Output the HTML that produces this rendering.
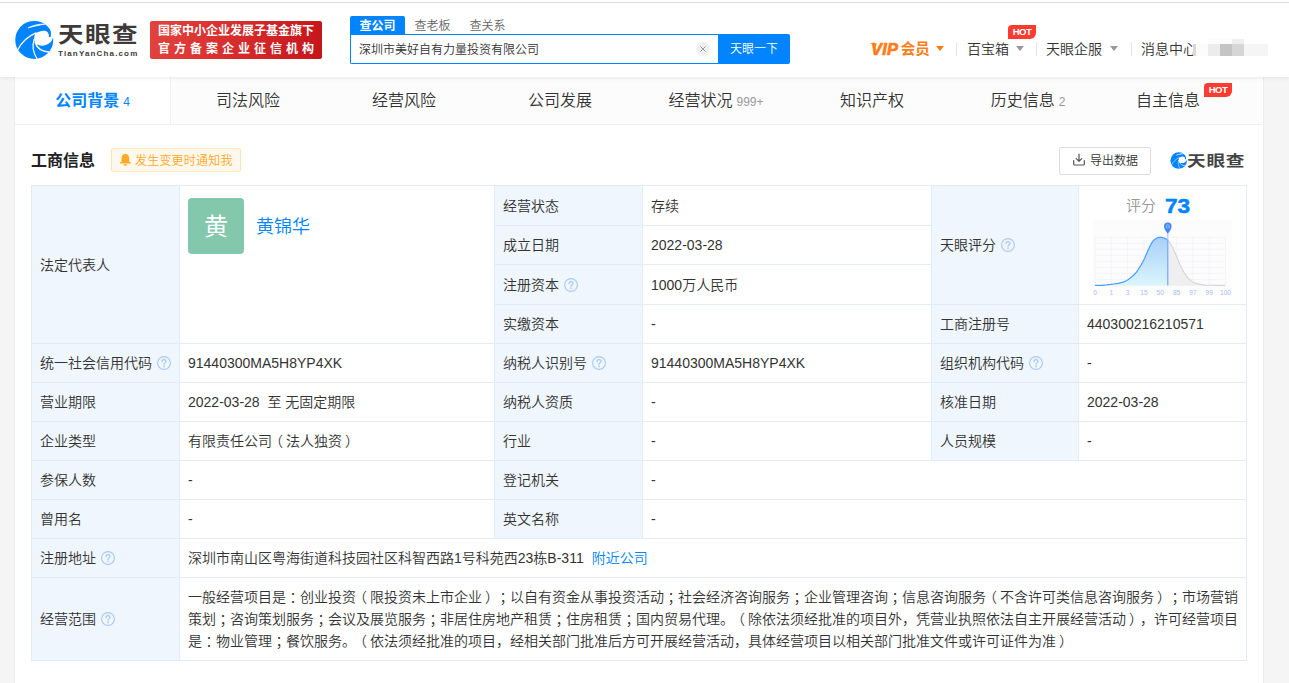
<!DOCTYPE html>
<html lang="zh-CN">
<head>
<meta charset="utf-8">
<title>天眼查 - 深圳市美好自有力量投资有限公司</title>
<style>
*{box-sizing:border-box;margin:0;padding:0}
html,body{width:1289px;height:683px;overflow:hidden}
body{font-weight:350;text-spacing-trim:space-all;background:#f5f5f5;font-family:"Liberation Sans","Noto Sans CJK SC",sans-serif;font-size:14px;color:#333;position:relative}
.abs{position:absolute}
/* header */
#hd{position:absolute;left:0;top:0;width:1289px;height:77px;background:#fff;box-shadow:0 1px 4px rgba(0,0,0,.08);z-index:5}
#topline{position:absolute;left:0;top:2px;width:1289px;height:1px;background:#dcdcdc}
#logo{position:absolute;left:12px;top:18px;width:44px;height:44px}
#lg-cn{position:absolute;left:58px;top:18.8px;font-size:21.5px;line-height:32px;font-weight:700;color:#3e3a39;letter-spacing:1.2px;white-space:nowrap;transform:scaleX(1.19);transform-origin:0 0}
#lg-en{position:absolute;left:58px;top:49px;font-size:8px;line-height:10px;font-weight:700;color:#3e3a39;letter-spacing:1.15px;white-space:nowrap}
#gov{position:absolute;left:150px;top:21px;width:172px;height:38px;border-radius:2px;background:linear-gradient(100deg,#e2433f 0%,#d52a2b 55%,#c5151b 100%);color:#fff;font-weight:700;font-size:12px;white-space:nowrap}
#gov div{position:absolute;left:8px;height:17px;line-height:17px}
#gov .l1{top:2px}
#gov .l2{top:19.6px;letter-spacing:4px}
.stab{position:absolute;top:16px;width:55px;height:18px;line-height:20px;text-align:center;font-size:12px;color:#666}
.stab.on{background:#0084ff;color:#fff;font-weight:700;border-radius:2px 2px 0 0}
#sbox{position:absolute;left:350px;top:34px;width:369px;height:30px;border:1px solid #0084ff;border-right:0;border-radius:0 0 0 2px;background:#fff}
#sbox span.t{position:absolute;left:8px;top:1px;line-height:28px;font-size:12px;color:#333;white-space:nowrap}
#sclr{position:absolute;left:696px;top:42px;width:14px;height:14px;border-radius:50%;background:#f0f0f0}
#sbtn{position:absolute;left:718px;top:34px;width:72px;height:30px;background:#0084ff;border-radius:0 2px 2px 0;color:#fff;font-size:12px;line-height:30px;text-align:center}
.nav{position:absolute;top:38px;height:22px;line-height:22px;font-size:14px;color:#333;white-space:nowrap}
.sep{position:absolute;top:42px;width:1px;height:14px;background:#e6e6e6}
.caret{position:absolute;top:46px;width:0;height:0;border-left:4px solid transparent;border-right:4px solid transparent;border-top:5px solid #999}
.hot{position:absolute;width:28px;height:14px;background:#fe3b30;border-radius:4px 0 6px 0;color:#fff;font-weight:700;font-size:9.6px;line-height:13.6px;text-align:center;letter-spacing:-.55px}
/* container */
#wrap{position:absolute;left:14px;top:77px;width:1250px;height:606px;background:#fff;border-left:1px solid #ececec;border-right:1px solid #ececec}
#tabs{position:absolute;left:0;top:0;width:1247px;height:48px;background:#fcfcfc;border-bottom:1px solid #eee}
.tab{position:absolute;top:0;width:156px;height:47px;line-height:47px;padding-right:2px;text-align:center;font-size:16px;color:#333;white-space:nowrap}
.tab.on{padding-right:0;background:#fff;color:#0084ff;font-weight:700;height:47px;border-right:1px solid #efefef}
.tab small{font-size:12px;font-weight:350;color:#999;margin-left:4px}
.tab.on small{color:#0084ff}
#sect{position:absolute;left:16px;top:68px;font-size:16px;line-height:32px;font-weight:700;color:#222}
#notice{position:absolute;left:96px;top:71px;width:130px;height:24px;border:1px solid #ffe4bd;background:#fff8ec;border-radius:2px;color:#ffa929;font-size:12px;line-height:22px;white-space:nowrap}
#notice span{position:absolute;left:23px;top:.5px;letter-spacing:.2px}
#export{position:absolute;left:1044px;top:70px;width:92px;height:28px;border:1px solid #ddd;border-radius:2px;background:#fff;font-size:12px;color:#333;line-height:26px;white-space:nowrap}
#export span{position:absolute;left:30px;top:0}
#wm{position:absolute;left:1154.2px;top:74px;width:19.2px;height:19.2px}
#wm-t{position:absolute;left:1171.6px;top:70px;font-size:14.7px;line-height:28px;font-weight:700;color:#444;white-space:nowrap;letter-spacing:.6px;transform:scaleX(1.27);transform-origin:0 0}
/* table */
table{position:absolute;left:16px;top:108px;width:1216px;border-collapse:separate;border-spacing:0;table-layout:fixed;border-top:1px solid #e2ecf6;border-left:1px solid #e2ecf6;font-size:14px;line-height:22px;color:#333}
td{border-right:1px solid #e2ecf6;border-bottom:1px solid #e2ecf6;padding:8px 8px 8px 8px;vertical-align:middle;background:#fff;white-space:nowrap;overflow:hidden}
td.k{background:#eff6fd}
td.wrap{white-space:normal}
a{color:#0084ff;text-decoration:none}
.pc{position:relative;left:3.5px}
.pl{position:relative;left:-3px}
.pr{position:relative;left:3px}
.q{display:inline-block;width:14px;height:14px;vertical-align:-2px;margin-left:5px}
</style>
</head>
<body>
<svg width="0" height="0" style="position:absolute"><defs><symbol id="tyc" viewBox="0 0 683 683">
<circle cx="345" cy="340" r="295" fill="#0084ff"/>
<path d="M368 236C420 205 480 190 525 202C560 214 576 250 572 294L598 300C606 270 608 230 598 190L700 190L700 316L634 312C620 370 560 420 480 430C440 432 405 422 385 408C365 390 352 370 348 350C338 310 348 262 368 236Z" fill="#fff"/>
<path d="M252 153C330 110 420 92 510 96C420 110 330 130 252 153Z" fill="#fff" stroke="#fff" stroke-width="12" stroke-linejoin="round"/>
<path d="M90 492C150 370 250 282 372 230" fill="none" stroke="#fff" stroke-width="19" stroke-linecap="round"/>
<path d="M345 330C312 420 330 540 390 634" fill="none" stroke="#fff" stroke-width="19" stroke-linecap="round"/>
<path d="M360 380C390 470 470 520 572 528" fill="none" stroke="#fff" stroke-width="24" stroke-linecap="round"/>
</symbol></defs></svg>
<div id="hd">
  <div id="topline"></div>
  <svg id="logo"><use href="#tyc"/></svg>
  <div id="lg-cn">天眼查</div>
  <div id="lg-en">TianYanCha.com</div>
  <div id="gov"><div class="l1">国家中小企业发展子基金旗下</div><div class="l2">官方备案企业征信机构</div></div>
  <div class="stab on" style="left:350px">查公司</div>
  <div class="stab" style="left:405px">查老板</div>
  <div class="stab" style="left:460px">查关系</div>
  <div id="sbox"><span class="t">深圳市美好自有力量投资有限公司</span></div>
  <div id="sclr"><svg width="14" height="14" viewBox="0 0 14 14"><path d="M4.3 4.3l5.4 5.4M9.7 4.3l-5.4 5.4" stroke="#999" stroke-width="1" fill="none"/></svg></div>
  <div id="sbtn">天眼一下</div>
  <div class="nav" style="left:871px;color:#ff7d18;font-weight:700;font-size:14.5px"><i style="display:inline-block;font-size:16.5px;letter-spacing:.2px;-webkit-text-stroke:.7px #ff7d18;margin-right:2.5px;vertical-align:-.5px">VIP</i><span style="position:relative;top:-.8px">会员</span></div><svg class="abs" style="left:868px;top:41px" width="12" height="8" viewBox="0 0 12 8"><path d="M1.6 2.2L9 2.4L7.2 6.2C6 4.2 4.2 3 1.6 2.2Z" fill="#ff7d18"/></svg>
  <div class="caret" style="left:936px;border-top-color:#ff7d18"></div>
  <div class="sep" style="left:956px"></div>
  <div class="nav" style="left:967px">百宝箱</div>
  <div class="caret" style="left:1016px"></div>
  <div class="hot" style="left:1008px;top:25px">HOT</div>
  <div class="sep" style="left:1036px"></div>
  <div class="nav" style="left:1046px">天眼企服</div>
  <div class="caret" style="left:1110px"></div>
  <div class="sep" style="left:1131px"></div>
  <div class="nav" style="left:1141px">消息中心</div>
  <div id="blur" class="abs" style="left:1193px;top:39px;width:75px;height:17px;background:#fff">
    <i class="abs" style="left:0;top:5px;width:3px;height:12px;background:#d8d8d8"></i>
    <i class="abs" style="left:3px;top:5px;width:12px;height:12px;background:#fcfcfc"></i>
    <i class="abs" style="left:15px;top:5px;width:12px;height:12px;background:#ececec"></i>
    <i class="abs" style="left:27px;top:5px;width:12px;height:12px;background:#c4c4c4"></i>
    <i class="abs" style="left:39px;top:5px;width:12px;height:12px;background:#d6d6d6"></i>
    <i class="abs" style="left:51px;top:5px;width:24px;height:12px;background:#f5f5f5"></i>
    <i class="abs" style="left:15px;top:0;width:24px;height:5px;background:#fcfcfc"></i>
    <i class="abs" style="left:39px;top:0;width:12px;height:5px;background:#eee"></i>
  </div>
</div>

<div id="wrap">
  <div id="tabs">
    <div class="tab on" style="left:0">公司背景<small>4</small></div>
    <div class="tab" style="left:156px">司法风险</div>
    <div class="tab" style="left:312px">经营风险</div>
    <div class="tab" style="left:468px">公司发展</div>
    <div class="tab" style="left:624px">经营状况<small>999+</small></div>
    <div class="tab" style="left:780px">知识产权</div>
    <div class="tab" style="left:936px">历史信息<small>2</small></div>
    <div class="tab" style="left:1092px">自主信息<span style="display:inline-block;width:32px"></span></div>
    <div class="hot" style="left:1189px;top:6px">HOT</div>
  </div>
  <div id="sect">工商信息</div>
  <div id="notice"><svg class="abs" style="left:7.2px;top:3.8px" width="13" height="14" viewBox="0 0 13 14"><path d="M6.4 .9C3.9 .9 2.6 2.9 2.6 5V8.4L1 9.6V10.5H11.8V9.6L10.2 8.4V5C10.2 2.9 8.9 .9 6.4 .9Z" fill="#ffa929"/><path d="M4.5 11.2H8.3C8.3 12.1 7.5 12.7 6.4 12.7C5.3 12.7 4.5 12.1 4.5 11.2Z" fill="#ffa929"/></svg><span>发生变更时通知我</span></div>
  <div id="export"><svg class="abs" style="left:12px;top:5.3px" width="14" height="14" viewBox="0 0 14 14"><path d="M7 1.2V8.2M4.2 5.6L7 8.3L9.8 5.6M1.7 7.6V11.2Q1.7 12 2.5 12H11.5Q12.3 12 12.3 11.2V7.6" fill="none" stroke="#555" stroke-width="1.2" stroke-linecap="round" stroke-linejoin="round"/></svg><span>导出数据</span></div>
  <svg id="wm"><use href="#tyc"/></svg>
  <div id="wm-t">天眼查</div>

  <table>
    <colgroup><col style="width:148px"><col style="width:315px"><col style="width:148px"><col style="width:289px"><col style="width:147px"><col style="width:168px"></colgroup>
    <tr style="height:40px"><td class="k" rowspan="4">法定代表人</td><td rowspan="4" id="rep" style="vertical-align:top"><div style="position:relative;height:141px"><div class="abs" style="left:0;top:4px;width:56px;height:56px;border-radius:4px;background:#83c8ad;color:#fff;font-size:24px;font-weight:400;line-height:57px;text-align:center">黄</div><a class="abs" style="left:68px;top:18.7px;font-size:18px;line-height:28px">黄锦华</a></div></td><td class="k">经营状态</td><td>存续</td><td class="k" rowspan="3">天眼评分<svg class="q" viewBox="0 0 14 14"><circle cx="7" cy="7" r="6.4" fill="none" stroke="#a9caee" stroke-width="1.1"/><path d="M5 5.6C5 4.4 5.9 3.7 7 3.7C8.1 3.7 9 4.4 9 5.4C9 6.9 7 6.8 7 8.6" fill="none" stroke="#a9caee" stroke-width="1.2" stroke-linecap="round"/><circle cx="7" cy="10.4" r=".8" fill="#a9caee"/></svg></td><td rowspan="3" id="score" style="padding:0;vertical-align:top"><div style="position:relative;width:167px;height:118px"><div class="abs" style="left:47px;top:8px;font-size:15px;line-height:23px;color:#999">评分</div><div class="abs" style="left:85.5px;top:7.3px;font-size:21px;line-height:26px;font-weight:700;color:#0084ff;transform:scaleX(1.08);transform-origin:0 0;-webkit-text-stroke:.5px #0084ff">73</div><svg class="abs" style="left:14px;top:34px" width="139" height="76" viewBox="0 0 139 76">
<defs><linearGradient id="gb" x1="0" y1="0" x2="0" y2="1"><stop offset="0" stop-color="#a9d0f8"/><stop offset="1" stop-color="#dbf5fc"/></linearGradient></defs>
<rect x="0" y="0" width="139" height="76" fill="#fcfcfd"/>
<path d="M2.0 17.2V65.6M18.3 17.2V65.6M34.6 17.2V65.6M50.9 17.2V65.6M67.2 17.2V65.6M83.6 17.2V65.6M99.9 17.2V65.6M116.2 17.2V65.6M132.5 17.2V65.6M2.0 17.2H132.5M2.0 23.2H132.5M2.0 29.3H132.5M2.0 35.3H132.5M2.0 41.4H132.5M2.0 47.4H132.5M2.0 53.5H132.5M2.0 59.5H132.5M2.0 65.6H132.5" stroke="#f3f4f7" stroke-width="1" fill="none"/>
<polygon points="2.0,65.6 2.0,65.4 2.6,65.4 3.3,65.4 4.2,65.4 5.2,65.4 6.2,65.4 7.3,65.4 8.4,65.3 9.4,65.3 10.5,65.2 11.5,65.1 12.6,65.0 13.7,64.9 14.9,64.7 16.0,64.6 17.1,64.5 18.2,64.3 19.3,64.2 20.4,64.0 21.6,63.9 22.7,63.7 23.8,63.6 24.9,63.4 26.0,63.2 27.0,62.9 28.0,62.6 29.0,62.4 29.9,62.1 30.9,61.8 31.8,61.4 32.7,61.0 33.7,60.5 34.6,60.0 35.6,59.3 36.6,58.6 37.6,57.8 38.6,57.0 39.6,56.1 40.6,55.2 41.4,54.3 42.2,53.5 42.9,52.8 43.5,52.1 44.0,51.4 44.5,50.7 44.9,50.0 45.4,49.3 45.8,48.5 46.3,47.7 46.9,46.8 47.4,46.0 48.0,45.1 48.5,44.1 49.1,43.2 49.7,42.2 50.2,41.2 50.8,40.1 51.3,38.9 51.9,37.7 52.4,36.4 53.0,35.1 53.5,33.7 54.1,32.5 54.6,31.2 55.1,30.1 55.6,29.1 56.0,28.1 56.5,27.2 56.9,26.2 57.3,25.4 57.8,24.6 58.2,23.8 58.6,23.1 59.0,22.4 59.5,21.8 59.9,21.2 60.3,20.7 60.7,20.2 61.2,19.8 61.6,19.4 62.1,19.0 62.7,18.7 63.3,18.3 63.9,18.0 64.5,17.8 65.2,17.6 65.8,17.4 66.4,17.3 67.0,17.2 67.6,17.3 68.2,17.3 68.8,17.4 69.4,17.6 69.9,17.8 70.5,18.0 71.0,18.2 71.5,18.4 72.0,18.6 72.4,18.7 72.8,18.9 73.2,19.0 73.6,19.2 74.0,19.5 74.4,19.8 74.8,20.2 74.8,20.2 74.8,65.6" fill="url(#gb)"/>
<polygon points="74.8,65.6 74.8,20.2 75.2,20.6 75.7,21.1 76.1,21.7 76.6,22.3 77.0,23.0 77.5,23.7 78.0,24.5 78.5,25.4 79.1,26.5 79.6,27.6 80.2,28.8 80.8,30.1 81.4,31.4 82.0,32.7 82.6,34.1 83.2,35.4 83.8,36.8 84.4,38.2 85.0,39.6 85.5,41.1 86.1,42.5 86.7,43.9 87.3,45.3 87.9,46.5 88.5,47.7 89.0,48.8 89.6,49.9 90.1,50.9 90.7,51.9 91.3,52.8 91.9,53.8 92.6,54.7 93.3,55.7 94.1,56.7 94.8,57.6 95.7,58.6 96.5,59.5 97.4,60.3 98.4,61.1 99.4,61.7 100.5,62.3 101.6,62.8 102.9,63.2 104.2,63.6 105.5,63.9 106.7,64.2 107.9,64.4 109.0,64.7 109.9,64.9 110.6,65.0 111.2,65.1 111.9,65.1 112.5,65.2 113.3,65.2 114.3,65.2 115.6,65.3 117.4,65.3 119.5,65.3 122.0,65.4 124.5,65.4 127.0,65.4 129.2,65.4 131.1,65.4 132.5,65.4 132.5,65.6" fill="#efefef"/>
<polyline points="74.8,20.2 75.2,20.6 75.7,21.1 76.1,21.7 76.6,22.3 77.0,23.0 77.5,23.7 78.0,24.5 78.5,25.4 79.1,26.5 79.6,27.6 80.2,28.8 80.8,30.1 81.4,31.4 82.0,32.7 82.6,34.1 83.2,35.4 83.8,36.8 84.4,38.2 85.0,39.6 85.5,41.1 86.1,42.5 86.7,43.9 87.3,45.3 87.9,46.5 88.5,47.7 89.0,48.8 89.6,49.9 90.1,50.9 90.7,51.9 91.3,52.8 91.9,53.8 92.6,54.7 93.3,55.7 94.1,56.7 94.8,57.6 95.7,58.6 96.5,59.5 97.4,60.3 98.4,61.1 99.4,61.7 100.5,62.3 101.6,62.8 102.9,63.2 104.2,63.6 105.5,63.9 106.7,64.2 107.9,64.4 109.0,64.7 109.9,64.9 110.6,65.0 111.2,65.1 111.9,65.1 112.5,65.2 113.3,65.2 114.3,65.2 115.6,65.3 117.4,65.3 119.5,65.3 122.0,65.4 124.5,65.4 127.0,65.4 129.2,65.4 131.1,65.4 132.5,65.4" fill="none" stroke="#d6d6d6" stroke-width="1.1"/>
<polyline points="2.0,65.4 2.6,65.4 3.3,65.4 4.2,65.4 5.2,65.4 6.2,65.4 7.3,65.4 8.4,65.3 9.4,65.3 10.5,65.2 11.5,65.1 12.6,65.0 13.7,64.9 14.9,64.7 16.0,64.6 17.1,64.5 18.2,64.3 19.3,64.2 20.4,64.0 21.6,63.9 22.7,63.7 23.8,63.6 24.9,63.4 26.0,63.2 27.0,62.9 28.0,62.6 29.0,62.4 29.9,62.1 30.9,61.8 31.8,61.4 32.7,61.0 33.7,60.5 34.6,60.0 35.6,59.3 36.6,58.6 37.6,57.8 38.6,57.0 39.6,56.1 40.6,55.2 41.4,54.3 42.2,53.5 42.9,52.8 43.5,52.1 44.0,51.4 44.5,50.7 44.9,50.0 45.4,49.3 45.8,48.5 46.3,47.7 46.9,46.8 47.4,46.0 48.0,45.1 48.5,44.1 49.1,43.2 49.7,42.2 50.2,41.2 50.8,40.1 51.3,38.9 51.9,37.7 52.4,36.4 53.0,35.1 53.5,33.7 54.1,32.5 54.6,31.2 55.1,30.1 55.6,29.1 56.0,28.1 56.5,27.2 56.9,26.2 57.3,25.4 57.8,24.6 58.2,23.8 58.6,23.1 59.0,22.4 59.5,21.8 59.9,21.2 60.3,20.7 60.7,20.2 61.2,19.8 61.6,19.4 62.1,19.0 62.7,18.7 63.3,18.3 63.9,18.0 64.5,17.8 65.2,17.6 65.8,17.4 66.4,17.3 67.0,17.2 67.6,17.3 68.2,17.3 68.8,17.4 69.4,17.6 69.9,17.8 70.5,18.0 71.0,18.2 71.5,18.4 72.0,18.6 72.4,18.7 72.8,18.9 73.2,19.0 73.6,19.2 74.0,19.5 74.4,19.8 74.8,20.2 74.8,20.2" fill="none" stroke="#4c9ffe" stroke-width="1.25"/>
<path d="M74.8 12.5V20.2" stroke="#a9c6ff" stroke-width="1.1"/>
<path d="M74.8 20.2V65.6" stroke="#6aa2ff" stroke-width="1.15"/>
<path d="M74.8 13.8C73.6 11.8 71.0 9.2 71.0 6.4A3.8 3.8 0 1 1 78.6 6.4C78.6 9.2 76.0 11.8 74.8 13.8Z" fill="#3f86f8"/>
<circle cx="74.8" cy="6.4" r="2.1" fill="#8db9fb"/><circle cx="74.8" cy="6.4" r="1" fill="#3f86f8"/>
<g font-family="Liberation Sans, sans-serif" font-size="6.5" fill="#a6c1ee"><text x="2.0" y="74.6" text-anchor="middle">0</text><text x="18.3" y="74.6" text-anchor="middle">1</text><text x="34.6" y="74.6" text-anchor="middle">3</text><text x="50.9" y="74.6" text-anchor="middle">15</text><text x="67.2" y="74.6" text-anchor="middle">50</text><text x="83.6" y="74.6" text-anchor="middle">85</text><text x="99.9" y="74.6" text-anchor="middle">97</text><text x="116.2" y="74.6" text-anchor="middle">99</text><text x="132.5" y="74.6" text-anchor="middle">100</text></g>
</svg></div></td></tr>
    <tr style="height:39px"><td class="k">成立日期</td><td>2022-03-28</td></tr>
    <tr style="height:40px"><td class="k">注册资本<svg class="q" viewBox="0 0 14 14"><circle cx="7" cy="7" r="6.4" fill="none" stroke="#a9caee" stroke-width="1.1"/><path d="M5 5.6C5 4.4 5.9 3.7 7 3.7C8.1 3.7 9 4.4 9 5.4C9 6.9 7 6.8 7 8.6" fill="none" stroke="#a9caee" stroke-width="1.2" stroke-linecap="round"/><circle cx="7" cy="10.4" r=".8" fill="#a9caee"/></svg></td><td>1000万人民币</td></tr>
    <tr style="height:39px"><td class="k">实缴资本</td><td>-</td><td class="k">工商注册号</td><td>440300216210571</td></tr>
    <tr style="height:39px"><td class="k">统一社会信用代码<svg class="q" viewBox="0 0 14 14"><circle cx="7" cy="7" r="6.4" fill="none" stroke="#a9caee" stroke-width="1.1"/><path d="M5 5.6C5 4.4 5.9 3.7 7 3.7C8.1 3.7 9 4.4 9 5.4C9 6.9 7 6.8 7 8.6" fill="none" stroke="#a9caee" stroke-width="1.2" stroke-linecap="round"/><circle cx="7" cy="10.4" r=".8" fill="#a9caee"/></svg></td><td>91440300MA5H8YP4XK</td><td class="k">纳税人识别号<svg class="q" viewBox="0 0 14 14"><circle cx="7" cy="7" r="6.4" fill="none" stroke="#a9caee" stroke-width="1.1"/><path d="M5 5.6C5 4.4 5.9 3.7 7 3.7C8.1 3.7 9 4.4 9 5.4C9 6.9 7 6.8 7 8.6" fill="none" stroke="#a9caee" stroke-width="1.2" stroke-linecap="round"/><circle cx="7" cy="10.4" r=".8" fill="#a9caee"/></svg></td><td>91440300MA5H8YP4XK</td><td class="k">组织机构代码<svg class="q" viewBox="0 0 14 14"><circle cx="7" cy="7" r="6.4" fill="none" stroke="#a9caee" stroke-width="1.1"/><path d="M5 5.6C5 4.4 5.9 3.7 7 3.7C8.1 3.7 9 4.4 9 5.4C9 6.9 7 6.8 7 8.6" fill="none" stroke="#a9caee" stroke-width="1.2" stroke-linecap="round"/><circle cx="7" cy="10.4" r=".8" fill="#a9caee"/></svg></td><td>-</td></tr>
    <tr style="height:39px"><td class="k">营业期限</td><td>2022-03-28&nbsp; 至 无固定期限</td><td class="k">纳税人资质</td><td>-</td><td class="k">核准日期</td><td>2022-03-28</td></tr>
    <tr style="height:39px"><td class="k">企业类型</td><td>有限责任公司<span class="pl">（</span>法人独资<span class="pr">）</span></td><td class="k">行业</td><td>-</td><td class="k">人员规模</td><td>-</td></tr>
    <tr style="height:39px"><td class="k">参保人数</td><td>-</td><td class="k">登记机关</td><td colspan="3">-</td></tr>
    <tr style="height:39px"><td class="k">曾用名</td><td>-</td><td class="k">英文名称</td><td colspan="3">-</td></tr>
    <tr style="height:39px"><td class="k">注册地址<svg class="q" viewBox="0 0 14 14"><circle cx="7" cy="7" r="6.4" fill="none" stroke="#a9caee" stroke-width="1.1"/><path d="M5 5.6C5 4.4 5.9 3.7 7 3.7C8.1 3.7 9 4.4 9 5.4C9 6.9 7 6.8 7 8.6" fill="none" stroke="#a9caee" stroke-width="1.2" stroke-linecap="round"/><circle cx="7" cy="10.4" r=".8" fill="#a9caee"/></svg></td><td colspan="5">深圳市南山区粤海街道科技园社区科智西路1号科苑西23栋B-311<a style="margin-left:8px">附近公司</a></td></tr>
    <tr style="height:83px"><td class="k">经营范围<svg class="q" viewBox="0 0 14 14"><circle cx="7" cy="7" r="6.4" fill="none" stroke="#a9caee" stroke-width="1.1"/><path d="M5 5.6C5 4.4 5.9 3.7 7 3.7C8.1 3.7 9 4.4 9 5.4C9 6.9 7 6.8 7 8.6" fill="none" stroke="#a9caee" stroke-width="1.2" stroke-linecap="round"/><circle cx="7" cy="10.4" r=".8" fill="#a9caee"/></svg></td><td colspan="5" class="wrap">一般经营项目是<span class="pc">：</span>创业投资<span class="pl">（</span>限投资未上市企业<span class="pr">）</span><span class="pc">；</span>以自有资金从事投资活动<span class="pc">；</span>社会经济咨询服务<span class="pc">；</span>企业管理咨询<span class="pc">；</span>信息咨询服务<span class="pl">（</span>不含许可类信息咨询服务<span class="pr">）</span><span class="pc">；</span>市场营销策划<span class="pc">；</span>咨询策划服务<span class="pc">；</span>会议及展览服务<span class="pc">；</span>非居住房地产租赁<span class="pc">；</span>住房租赁<span class="pc">；</span>国内贸易代理。<span class="pl">（</span>除依法须经批准的项目外，凭营业执照依法自主开展经营活动<span class="pr">）</span>，许可经营项目是<span class="pc">：</span>物业管理<span class="pc">；</span>餐饮服务。<span class="pl">（</span>依法须经批准的项目，经相关部门批准后方可开展经营活动，具体经营项目以相关部门批准文件或许可证件为准<span class="pr">）</span></td></tr>
  </table>
</div>
</body>
</html>
